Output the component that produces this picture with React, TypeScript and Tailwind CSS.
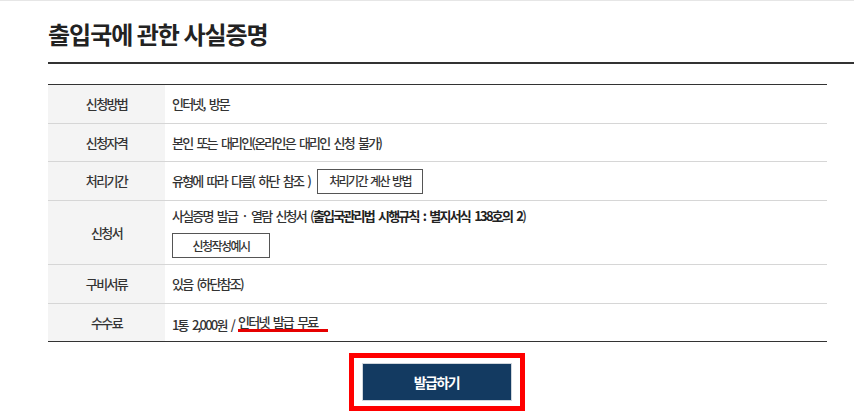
const kr = { fontFamily: '"Noto Sans CJK KR", "Noto Sans", sans-serif' };

function Row({
    label,
    height,
    last,
    children,
}: {
    label: string;
    height: string;
    last?: boolean;
    children: React.ReactNode;
}) {
    return (
        <div className={`flex border-b ${last ? 'border-[#333333]' : 'border-[#d6d6d6]'} ${height}`}>
            <div className="flex w-[117px] shrink-0 items-center justify-center bg-[#f4f4f4] text-[13px] font-medium tracking-[-1.6px] text-[#333333]">
                {label}
            </div>
            <div className="flex flex-1 flex-col justify-center pl-[7px] text-[13px] font-medium tracking-[-1.8px] text-[#333333] [word-spacing:3px]">
                {children}
            </div>
        </div>
    );
}

export default function App() {
    return (
        <div style={kr} className="min-h-[416px] border-t border-[#e6e6e6] bg-white pl-[48px] pt-[15px]">
            <h1 className="text-[24px] font-bold leading-[36px] tracking-[-1px] text-[#222222]">
                출입국에 관한 사실증명
            </h1>
            <div className="mt-[10px] h-[2px] bg-[#333333]" />

            <div className="mt-[20px] w-[779px] border-t border-[#333333]">
                <Row label="신청방법" height="h-[39px]">
                    <span>인터넷, 방문</span>
                </Row>
                <Row label="신청자격" height="h-[38px]">
                    <span>본인 또는 대리인(온라인은 대리인 신청 불가)</span>
                </Row>
                <Row label="처리기간" height="h-[39px]">
                    <div className="flex items-center gap-[7px]">
                        <span>유형에 따라 다름( 하단 참조 )</span>
                        <button className="h-[25px] w-[106px] border border-[#555555] bg-white text-[12px] font-medium tracking-[-1.6px] text-[#333333] [word-spacing:2px]">
                            처리기간 계산 방법
                        </button>
                    </div>
                </Row>
                <Row label="신청서" height="h-[64px]">
                    <div className="flex flex-col items-start">
                        <span className="leading-[18px]">
                            사실증명 발급 · 열람 신청서 (
                            <b className="font-bold text-[#222222]">출입국관리법 시행규칙 : 별지서식 138호의 2</b>)
                        </span>
                        <button className="mt-[8px] h-[25px] w-[98px] border border-[#555555] bg-white text-[12px] font-medium tracking-[-1.5px] text-[#333333]">
                            신청작성예시
                        </button>
                    </div>
                </Row>
                <Row label="구비서류" height="h-[39px]">
                    <span>있음 (하단참조)</span>
                </Row>
                <Row label="수수료" height="h-[38px]" last>
                    <div className="flex items-end">
                        <span className="leading-[15px]">1통 2,000원 /&nbsp;</span>
                        <span className="inline-block border-b-[3px] border-[#e60000] pr-[11px] leading-[15px]">
                            인터넷 발급 무료
                        </span>
                    </div>
                </Row>
            </div>

            <div className="flex w-[777px] justify-center pt-[11px]">
                <div className="border-[5px] border-[#ff0000] px-[8px] py-[5px]">
                    <button className="h-[38px] w-[150px] border border-[#d0d6dc] bg-[#133a61] text-[14px] font-bold tracking-[-1.5px] text-white">
                        발급하기
                    </button>
                </div>
            </div>
        </div>
    );
}
